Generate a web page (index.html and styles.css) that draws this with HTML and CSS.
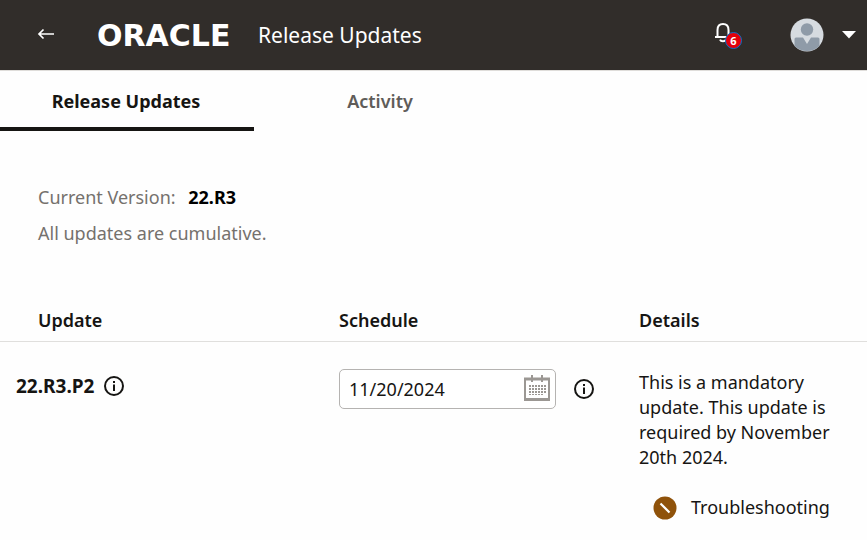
FILE: index.html
```html
<!DOCTYPE html>
<html lang="en">
<head>
  <meta charset="UTF-8" />
  <meta name="viewport" content="width=device-width, initial-scale=1.0"/>
  <title>Release Updates</title>
  <link rel="stylesheet" href="styles.css">
</head>
<body>
  <header class="topbar">
    <button type="button" class="back" aria-label="Back">
      <svg width="18" height="14" viewBox="0 0 18 14" fill="none" stroke="#fff" stroke-width="1.700">
        <path d="M18 6H3M7.500 1.500L3 6l4.500 4.500" />
      </svg>
    </button>
    <span class="brand">ORACLE</span>
    <h1>Release Updates</h1>
    <div class="actions">
      <button type="button" class="bell" aria-label="Notifications">
        <svg width="20" height="22" viewBox="0 0 20 22" fill="none" stroke="#fff" stroke-width="2">
          <path d="M1 15h16M3.500 14.500V8C3.500 4 5.500 2 9 2s5.500 2 5.500 6v6.500" />
          <path d="M6 17.700c.6 1.300 1.700 1.600 3 1.600s2.400-.3 3-1.600" />
        </svg>
        <span class="badge">6</span>
      </button>
      <button type="button" class="user" aria-label="Account">
        <svg width="34" height="34" viewBox="0 0 34 34">
          <circle cx="17" cy="17" r="16.500" fill="#d6dbe0" />
          <circle cx="17" cy="11.500" r="6.200" fill="#8f9ba8" />
          <path d="M4.500 21q0-1.500 1.500-1.500h7l4 6.500 4-6.500h7q1.500 0 1.500 1.500v7Q24.500 33 17 33T4.500 28z" fill="#8f9ba8" />
        </svg>
        <svg width="14" height="8" viewBox="0 0 14 8" fill="#fff">
          <path d="M0 0h14L7 7.500z" />
        </svg>
      </button>
    </div>
  </header>

  <nav class="tabs">
    <a href="#updates" class="tab active">Release Updates</a>
    <a href="#activity" class="tab">Activity</a>
  </nav>

  <main id="updates">
    <div class="summary">
      <p>Current Version: <strong>22.R3</strong></p>
      <p>All updates are cumulative.</p>
    </div>

    <table class="updates">
      <thead>
        <tr>
          <th scope="col">Update</th>
          <th scope="col">Schedule</th>
          <th scope="col">Details</th>
        </tr>
      </thead>
      <tbody>
        <tr>
          <td class="version">
            <div class="line">
              <strong>22.R3.P2</strong>
              <button type="button" class="info" aria-label="Update information">
                <svg width="22" height="22" viewBox="0 0 22 22" fill="none" stroke="#161513" stroke-width="2">
                  <circle cx="11" cy="11" r="9" />
                  <path d="M11 9.500V16M11 6v2" />
                </svg>
              </button>
            </div>
          </td>
          <td>
            <div class="line schedule">
              <div class="date-field">
                <input type="text" value="11/20/2024" aria-label="Schedule date">
                <button type="button" class="calendar" aria-label="Select date">
                  <svg width="26" height="28" viewBox="0 0 26 28" fill="none" stroke="#9b9793">
                    <path d="M1 4h24v20.500H1z" stroke-width="2" />
                    <path d="M0 4h26M0 24.500h26" stroke-width="3" />
                    <path d="M8 0v7M18 0v7" stroke-width="2" />
                    <path d="M5 11h17M5 14h17M5 17h17" stroke-width="2" stroke-dasharray="2 1" />
                    <path d="M5 19.500h14" stroke-dasharray="2 1" />
                  </svg>
                </button>
              </div>
              <button type="button" class="info" aria-label="Schedule information">
                <svg width="22" height="22" viewBox="0 0 22 22" fill="none" stroke="#161513" stroke-width="2">
                  <circle cx="11" cy="11" r="9" />
                  <path d="M11 9.500V16M11 6v2" />
                </svg>
              </button>
            </div>
          </td>
          <td>
            <p class="details">This is a mandatory update. This update is required by November 20th 2024.</p>
            <div class="status">
              <svg width="24" height="24" viewBox="0 0 24 24">
                <circle cx="12" cy="12" r="11.500" fill="#8f520a" />
                <path d="M7.500 7.500l9 9" stroke="#fff" stroke-width="2.200" />
              </svg>
              <span>Troubleshooting</span>
            </div>
          </td>
        </tr>
      </tbody>
    </table>
  </main>
</body>
</html>
```
FILE: styles.css
```css
* {
  box-sizing: border-box;
}
body {
  font-family: "Noto Sans", "Open Sans", sans-serif;
  font-size: 18px;
  line-height: 25px;
  color: #161513;
  background: #fefefe;
  margin: 0;
}
button {
  display: flex;
  align-items: center;
  font-family: inherit;
  padding: 0;
  border: none;
  background: none;
  cursor: pointer;
}
p {
  margin: 0;
}
.topbar {
  display: flex;
  align-items: center;
  height: 71px;
  padding: 0 11px 0 36px;
  background: #312d2a;
  border-bottom: 1px solid #dfddda;
  color: #fff;
}
.back {
  width: 61px;
}
.brand {
  min-width: 161px;
  font-family: "DejaVu Sans", sans-serif;
  font-size: 30px;
  font-weight: bold;
}
h1 {
  margin: 0;
  font-size: 21px;
  font-weight: 400;
}
.actions {
  display: flex;
  align-items: center;
  gap: 56px;
  margin-left: auto;
}
.bell {
  position: relative;
  padding-bottom: 4px;
}
.badge {
  position: absolute;
  left: 11px;
  top: 10px;
  width: 17px;
  height: 17px;
  border: 1px solid #0572ce;
  border-radius: 50%;
  background: #e3000b;
  color: #fff;
  font-size: 11px;
  font-weight: bold;
  line-height: 15px;
  text-align: center;
}
.user {
  gap: 18px;
}
.tabs {
  display: flex;
}
.tab {
  width: 254px;
  padding: 18px 2px 13px 0;
  border-bottom: 4px solid transparent;
  color: #5f5c59;
  font-weight: 600;
  text-align: center;
  text-decoration: none;
}
.tab.active {
  border-color: #161513;
  color: #161513;
  font-weight: bold;
}
.summary {
  display: grid;
  gap: 11px;
  padding: 54px 38px 0;
  color: #75716d;
}
.summary strong {
  margin-left: 8px;
  color: #000;
}
.updates {
  width: 100%;
  margin-top: 50px;
  border-collapse: collapse;
  table-layout: fixed;
}
th {
  padding: 12px 38px 8px;
  border-bottom: 1px solid #e0dfdd;
  font-weight: 600;
  text-align: left;
}
th:first-child {
  width: 301px;
}
th:nth-child(2) {
  width: 300px;
}
td {
  padding: 27px 28px 20px 38px;
  vertical-align: top;
}
.version {
  padding-left: 16px;
}
.version .line {
  height: 34px;
}
.version strong {
  font-size: 19px;
}
.line {
  display: flex;
  align-items: center;
  gap: 9px;
}
.schedule {
  gap: 17px;
  margin-right: -28px;
}
.date-field {
  display: flex;
  align-items: center;
  width: 217px;
  height: 40px;
  padding: 0 5px 0 9px;
  border: 1px solid #b5b3b1;
  border-radius: 5px;
  background: #fff;
}
.date-field input {
  flex: 1;
  min-width: 0;
  padding: 0;
  border: none;
  outline: none;
  background: none;
  color: inherit;
  font: inherit;
}
.details {
  padding-top: 1px;
}
.status {
  display: flex;
  align-items: center;
  gap: 14px;
  margin-top: 25px;
  padding-left: 14px;
  white-space: nowrap;
}
```
